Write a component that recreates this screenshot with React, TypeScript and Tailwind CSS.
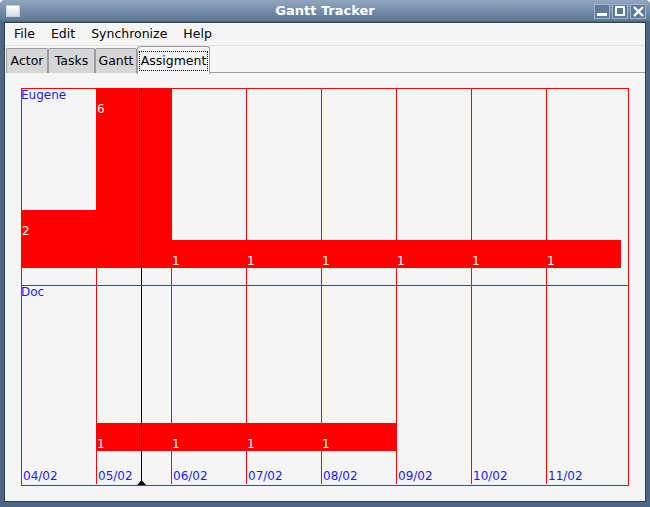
import React from 'react';

const cols = [21, 96, 171, 246, 321, 396, 471, 546];
const dates = ['04/02', '05/02', '06/02', '07/02', '08/02', '09/02', '10/02', '11/02'];

const GanttChart: React.FC = () => (
  <svg width={640} height={428} className="block" style={{ fontFamily: '"DejaVu Sans", sans-serif' }}>
    <g transform="translate(-5,-73)" fontSize={12}>
      {/* Eugene bars */}
      <rect x={21} y={210} width={75} height={58} fill="#ff0000" />
      <rect x={96} y={88} width={75} height={180} fill="#ff0000" />
      <rect x={171} y={240} width={450} height={28} fill="#ff0000" />
      {/* Doc bars */}
      <rect x={96} y={423} width={300} height={28} fill="#ff0000" />

      {/* grid */}
      {cols.slice(1).map((x) => (
        <line key={x} x1={x + 0.5} y1={88} x2={x + 0.5} y2={484} stroke="#ff0000" />
      ))}
      <line x1={21} y1={285.5} x2={628} y2={285.5} stroke="#ff0000" />
      <rect x={21.5} y={88.5} width={607} height={397} fill="none" stroke="#ff0000" />

      {/* today marker */}
      <line x1={141.5} y1={88} x2={141.5} y2={485} stroke="#000" />
      <polygon points="137,485 141.5,480 146,485" fill="#000" />

      <text x={21} y={99} fill="#1a1aff">Eugene</text>
      <text x={97} y={113} fill="#fff">6</text>
      <text x={22} y={235} fill="#fff">2</text>
      {cols.slice(2).map((x) => (
        <text key={x} x={x + 1} y={265} fill="#fff">1</text>
      ))}

      <text x={21} y={296} fill="#1a1aff">Doc</text>
      {[96, 171, 246, 321].map((x) => (
        <text key={x} x={x + 1} y={448} fill="#fff">1</text>
      ))}

      {dates.map((d, i) => (
        <text key={d} x={cols[i] + 2} y={480} fill="#1a1aff">{d}</text>
      ))}
    </g>
  </svg>
);

const TitleButton: React.FC<{ children: React.ReactNode }> = ({ children }) => (
  <div className="w-[16px] h-[15px] border border-[#a5b6c9] bg-[#5f7a98] flex items-center justify-center">
    {children}
  </div>
);

const App: React.FC = () => {
  const tabs = [
    { label: 'Actor', w: 'w-[42px]' },
    { label: 'Tasks', w: 'w-[47px]' },
    { label: 'Gantt', w: 'w-[42px]' },
  ];
  return (
    <div
      className="w-[650px] h-[507px] bg-[#4d6682] flex flex-col rounded-t-[5px] overflow-hidden"
      style={{ fontFamily: '"DejaVu Sans", sans-serif' }}
    >
      {/* title bar */}
      <div className="h-[21px] bg-gradient-to-b from-[#90a7c0] to-[#5b7695] flex items-center px-[6px] relative">
        <div className="w-[14px] h-[12px] bg-gradient-to-b from-white to-[#d8dde3] border border-[#c7d0da]" />
        <div className="absolute inset-0 flex items-center justify-center text-white text-[13px] font-bold">
          Gantt Tracker
        </div>
        <div className="ml-auto flex gap-[2px] mt-[1px] mr-[-2px]">
          <TitleButton>
            <div className="w-[10px] h-[3px] bg-white mt-[7px]" />
          </TitleButton>
          <TitleButton>
            <div className="w-[10px] h-[10px] border-2 border-white" />
          </TitleButton>
          <TitleButton>
            <svg width="11" height="11" viewBox="0 0 11 11">
              <path d="M1 1 L10 10 M10 1 L1 10" stroke="#fff" strokeWidth="2.4" />
            </svg>
          </TitleButton>
        </div>
      </div>

      {/* window body */}
      <div className="flex-1 mx-[4px] mb-[5px] mt-[1px] bg-[#f5f5f5] border border-[#2e3d4e] shadow-[inset_1px_1px_0_#ffffff] flex flex-col">
        {/* menu bar */}
        <div className="h-[23px] flex items-center text-[12.5px] text-black border-b border-[#e2e2e2] pl-[9px] gap-[16px]">
          <span>File</span>
          <span>Edit</span>
          <span>Synchronize</span>
          <span>Help</span>
        </div>

        {/* tabs */}
        <div className="h-[27px] flex items-end pl-[1px] pt-[1px]">
          {tabs.map((t) => (
            <div
              key={t.label}
              className={`${t.w} h-[25px] flex items-center justify-center text-[12.5px] bg-[#d6d6d6] border border-[#9c9c9c] border-b-0 rounded-t-[2px]`}
            >
              {t.label}
            </div>
          ))}
          <div className="h-[28px] w-[73px] flex items-center justify-center bg-[#f5f5f5] border border-[#9c9c9c] border-b-0 rounded-t-[3px] relative top-[1px]">
            <span className="text-[12.5px] border border-dotted border-black px-[1px] leading-[18px]">Assigment</span>
          </div>
          <div className="flex-1 border-b border-[#9c9c9c]" />
        </div>

        {/* panel */}
        <div className="flex-1 relative">
          <div className="absolute left-0 top-0">
            <GanttChart />
          </div>
        </div>
      </div>
    </div>
  );
};

export default App;
